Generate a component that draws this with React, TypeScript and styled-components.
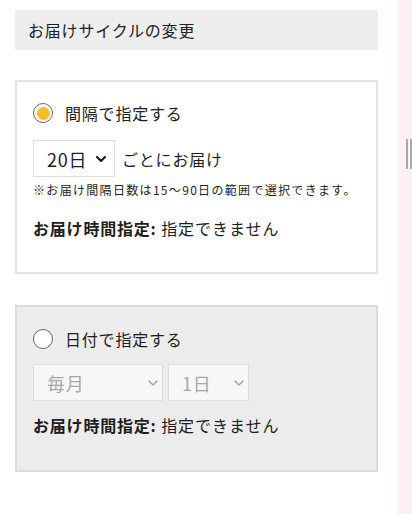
import React from "react";
import styled, { createGlobalStyle } from "styled-components";

const GlobalStyle = createGlobalStyle`
  html, body { margin: 0; padding: 0; background: #ffffff; }
  body {
    font-family: "Noto Sans CJK JP", "Noto Sans", sans-serif;
    color: #1e1e1e;
  }
  * { box-sizing: border-box; }
`;

const Page = styled.div`
  display: flex;
  width: 412px;
  min-height: 514px;
`;

const Main = styled.main`
  width: 363px;
  margin: 10px 0 0 15px;
  display: flex;
  flex-direction: column;
`;

const Strip = styled.aside`
  margin-left: auto;
  width: 14px;
  min-height: 514px;
  background: #fcf0f3;
  display: flex;
  gap: 2px;
  padding: 139px 0 0 8px;
  align-items: flex-start;
`;

const Grip = styled.span`
  display: block;
  width: 2px;
  height: 30px;
  background: #a9a9a9;
`;

const Header = styled.h2`
  margin: 0;
  height: 40px;
  background: #eeeeee;
  padding-left: 13px;
  display: flex;
  align-items: center;
  font-size: 16px;
  font-weight: 400;
  letter-spacing: 0.05em;
  color: #222;
`;

const Card = styled.section<{ $muted?: boolean; $top: number; $pt: number; $pb: number }>`
  margin-top: ${(p) => p.$top}px;
  border: 2px solid ${(p) => (p.$muted ? "#dcdcdc" : "#e3e3e3")};
  background: ${(p) => (p.$muted ? "#ececec" : "#ffffff")};
  padding: ${(p) => p.$pt}px 16px ${(p) => p.$pb}px 16px;
  display: flex;
  flex-direction: column;
`;

const RadioRow = styled.label`
  display: flex;
  align-items: center;
  height: 24px;
  gap: 12px;
  font-size: 16px;
  letter-spacing: 0.05em;
  line-height: 24px;
`;

const RadioCircle = styled.span`
  width: 20px;
  height: 20px;
  border-radius: 50%;
  border: 1.5px solid #666666;
  background: #ffffff;
  display: flex;
  align-items: center;
  justify-content: center;
  flex: none;
`;

const RadioDot = styled.span`
  width: 13px;
  height: 13px;
  border-radius: 50%;
  background: #f8bc2b;
`;

const SelectRow = styled.div<{ $mt: number }>`
  margin-top: ${(p) => p.$mt}px;
  display: flex;
  align-items: center;
  gap: 5px;
`;

const SelectWrap = styled.div<{ $w: number }>`
  position: relative;
  width: ${(p) => p.$w}px;
  height: 37px;
`;

const Select = styled.select<{ $disabled?: boolean }>`
  appearance: none;
  -webkit-appearance: none;
  width: 100%;
  height: 100%;
  border: 1px solid ${(p) => (p.$disabled ? "#dedede" : "#dcdcdc")};
  border-radius: 0;
  background: ${(p) => (p.$disabled ? "#f7f7f7" : "#ffffff")};
  color: ${(p) => (p.$disabled ? "#a8a8a8" : "#1e1e1e")};
  font-family: "Noto Sans CJK JP", "Noto Sans", sans-serif;
  font-size: 18px;
  letter-spacing: 0.04em;
  padding: 0 0 0 13px;
  outline: none;
  opacity: 1;
`;

const Chevron = styled.svg<{ $right: number }>`
  position: absolute;
  top: 50%;
  right: ${(p) => p.$right}px;
  margin-top: -3px;
  pointer-events: none;
`;

const Suffix = styled.span`
  margin-left: 2px;
  font-size: 16px;
  letter-spacing: 0.05em;
`;

const Note = styled.p`
  margin: 4px 0 0;
  font-size: 12px;
  line-height: 18px;
  letter-spacing: 0.11em;
`;

const TimeLine = styled.p<{ $mt: number }>`
  margin: ${(p) => p.$mt}px 0 0;
  font-size: 16px;
  line-height: 24px;
  letter-spacing: 0.06em;
`;

const Strong = styled.strong`
  font-weight: 700;
  letter-spacing: 0.05em;
`;

function ChevronIcon({ right, dark }: { right: number; dark?: boolean }) {
  return (
    <Chevron $right={right} width="10" height="6" viewBox="0 0 10 6" fill="none">
      <path
        d="M1 1 L5 5 L9 1"
        stroke={dark ? "#1e1e1e" : "#a0a0a0"}
        strokeWidth={dark ? 2.2 : 1.4}
        strokeLinecap="round"
        strokeLinejoin="round"
      />
    </Chevron>
  );
}

export default function App() {
  return (
    <>
      <GlobalStyle />
      <Page>
        <Main>
          <Header>お届けサイクルの変更</Header>

          <Card $top={30} $pt={19} $pb={32}>
            <RadioRow>
              <RadioCircle>
                <RadioDot />
              </RadioCircle>
              間隔で指定する
            </RadioRow>
            <SelectRow $mt={15}>
              <SelectWrap $w={82}>
                <Select defaultValue="20">
                  <option value="20">20日</option>
                </Select>
                <ChevronIcon right={9} dark />
              </SelectWrap>
              <Suffix>ごとにお届け</Suffix>
            </SelectRow>
            <Note>※お届け間隔日数は15〜90日の範囲で選択できます。</Note>
            <TimeLine $mt={17}>
              <Strong>お届け時間指定:</Strong> 指定できません
            </TimeLine>
          </Card>

          <Card $muted $top={31} $pt={20} $pb={33}>
            <RadioRow>
              <RadioCircle />
              日付で指定する
            </RadioRow>
            <SelectRow $mt={13}>
              <SelectWrap $w={130}>
                <Select $disabled disabled defaultValue="m">
                  <option value="m">毎月</option>
                </Select>
                <ChevronIcon right={5} />
              </SelectWrap>
              <SelectWrap $w={81}>
                <Select $disabled disabled defaultValue="1">
                  <option value="1">1日</option>
                </Select>
                <ChevronIcon right={5} />
              </SelectWrap>
            </SelectRow>
            <TimeLine $mt={12}>
              <Strong>お届け時間指定:</Strong> 指定できません
            </TimeLine>
          </Card>
        </Main>
        <Strip>
          <Grip />
          <Grip />
        </Strip>
      </Page>
    </>
  );
}
